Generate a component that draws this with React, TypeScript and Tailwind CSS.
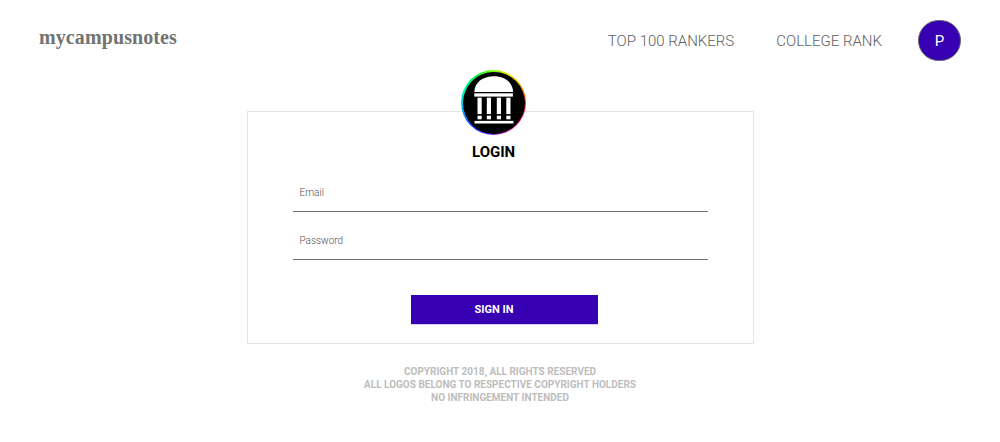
function CampusLogo() {
  return (
    <div className="size-[65px] rounded-full bg-[conic-gradient(from_0deg,#7dff00,#ffe000_35deg,#ff8a00_65deg,#ff2020_95deg,#ff1060_120deg,#ff20d0_150deg,#b020ff_170deg,#3020ff_200deg,#1060ff_235deg,#00c8f0_265deg,#00ffb0_295deg,#00f040_325deg,#7dff00)] p-[1.5px]">
      <svg viewBox="1.5 1.5 62 62" className="block size-full rounded-full bg-black" fill="#fff">
        <path d="M12.8 21.6C13 12 21 5.7 32.2 5.7S51.4 12 51.6 21.6z" />
        <rect x="12.8" y="22.8" width="38.6" height="3.3" />
        {[16, 25.3, 35.3, 44.8].map((x) => (
          <g key={x}>
            <rect x={x} y="27.2" width="4.2" height="16.4" />
            <rect x={x} y="45.2" width="4.2" height="3.6" />
          </g>
        ))}
        <rect x="13" y="50.4" width="39" height="2.6" />
      </svg>
    </div>
  );
}

function Field({ label, type }: { label: string; type: string }) {
  return (
    <input
      type={type}
      placeholder={label}
      aria-label={label}
      className="block h-[31px] w-[415px] border-b border-[#717171] bg-transparent px-[7px] pb-[7px] text-[10px] font-light outline-none placeholder:text-[#505050]"
    />
  );
}

export default function App() {
  return (
    <div className="h-[442px] overflow-hidden bg-white font-['Roboto',sans-serif]">
      <header className="flex h-[70px] items-start pl-[39px] pr-[39px]">
        <a href="#" className="mt-[24px] font-['Liberation_Serif',serif] text-[20px] leading-[26px] font-bold tracking-[0.1px] text-[#737373]">
          mycampusnotes
        </a>
        <nav className="mt-[20px] ml-auto flex h-[41px] items-center text-[15px] font-light text-[#606060]">
          <a href="#" className="mr-[42px] pt-[2px]">TOP 100 RANKERS</a>
          <a href="#" className="mr-[36px] pt-[2px]">COLLEGE RANK</a>
          <span className="flex h-[41px] w-[43px] items-center justify-center rounded-full border border-[#666] bg-[#3700b3] pt-[2px] font-normal text-white">P</span>
        </nav>
      </header>

      <main className="mt-[41px] ml-[247px] flex h-[233px] w-[507px] flex-col border border-[#e5e5e5]">
        <div className="-mt-[42px] ml-[213px]">
          <CampusLogo />
        </div>
        <h1 className="mt-[7px] ml-[224px] text-[15px] leading-5 font-bold text-black">LOGIN</h1>
        <form className="ml-[44.5px] flex flex-col" onSubmit={(event) => event.preventDefault()}>
          <div className="mt-[19px] flex flex-col gap-[17px]">
            <Field label="Email" type="email" />
            <Field label="Password" type="password" />
          </div>
          <button className="mt-[35px] ml-[118.5px] h-[29px] w-[187px] bg-[#3700b3] pt-px pr-[21px] text-[11px] font-bold text-white shadow-[0_1px_0_#d7ccf0]">
            SIGN IN
          </button>
        </form>
      </main>

      <footer className="mt-[21px] text-center text-[10px] leading-[13px] font-bold text-[#bdbdbd]">
        <p>COPYRIGHT 2018, ALL RIGHTS RESERVED</p>
        <p>ALL LOGOS BELONG TO RESPECTIVE COPYRIGHT HOLDERS</p>
        <p>NO INFRINGEMENT INTENDED</p>
      </footer>
    </div>
  );
}
